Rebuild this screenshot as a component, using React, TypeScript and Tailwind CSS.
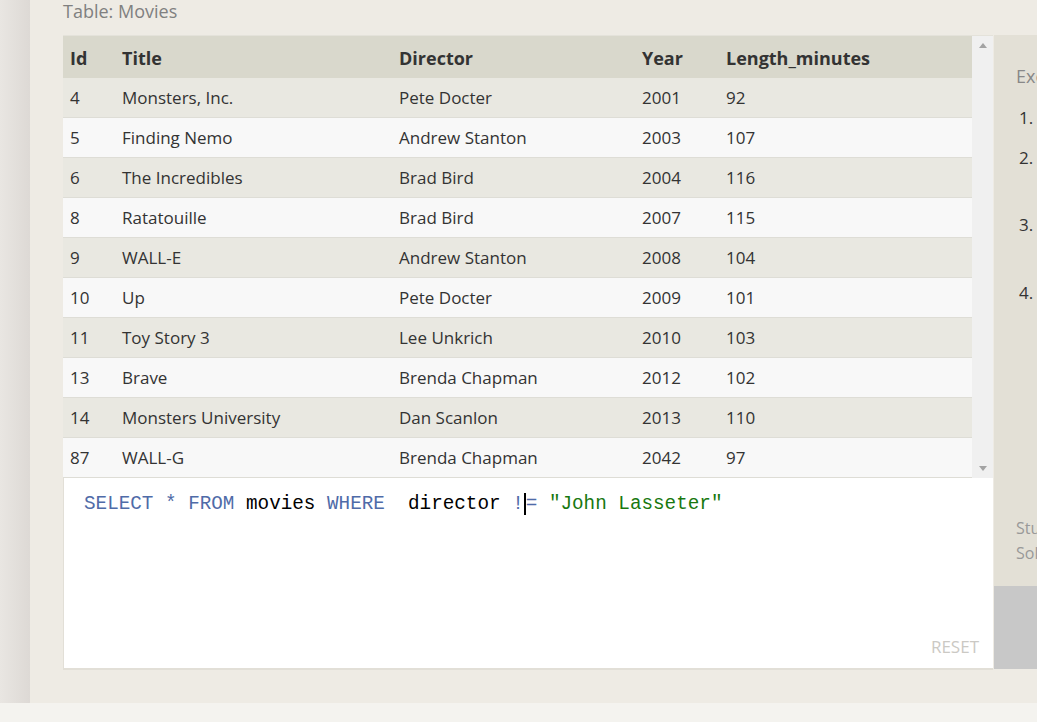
import React from 'react';

interface Movie {
    id: number;
    title: string;
    director: string;
    year: number;
    length: number;
}

const movies: Movie[] = [
    { id: 4, title: 'Monsters, Inc.', director: 'Pete Docter', year: 2001, length: 92 },
    { id: 5, title: 'Finding Nemo', director: 'Andrew Stanton', year: 2003, length: 107 },
    { id: 6, title: 'The Incredibles', director: 'Brad Bird', year: 2004, length: 116 },
    { id: 8, title: 'Ratatouille', director: 'Brad Bird', year: 2007, length: 115 },
    { id: 9, title: 'WALL-E', director: 'Andrew Stanton', year: 2008, length: 104 },
    { id: 10, title: 'Up', director: 'Pete Docter', year: 2009, length: 101 },
    { id: 11, title: 'Toy Story 3', director: 'Lee Unkrich', year: 2010, length: 103 },
    { id: 13, title: 'Brave', director: 'Brenda Chapman', year: 2012, length: 102 },
    { id: 14, title: 'Monsters University', director: 'Dan Scanlon', year: 2013, length: 110 },
    { id: 87, title: 'WALL-G', director: 'Brenda Chapman', year: 2042, length: 97 },
];

const font = { fontFamily: '"Open Sans", "Noto Sans", sans-serif' };

export default function App() {
    return (
        <div className="flex h-[722px] w-[1037px] flex-col overflow-hidden bg-[#f4f3ef]" style={font}>
            <div className="flex h-[703px]">
                {/* left shadow strip */}
                <div className="w-[30px] shrink-0 bg-linear-to-r from-[#e9e6e2] to-[#ddd9d5]" />

                <div className="flex min-w-0 flex-1 flex-col bg-[#eeebe4] pl-[33px]">
                    <div className="h-[35px] text-[18px] leading-[22px] text-[#808080]">Table: Movies</div>

                    <div className="flex">
                        <div className="flex w-[930px] shrink-0 flex-col">
                            {/* results table */}
                            <div className="flex h-[443px] border-t border-[#e4e2da]">
                                <div className="w-[909px]">
                                    <div className="flex h-[42px] items-center bg-[#d9d8cc] pt-[3px] text-[18px] font-bold text-[#333]">
                                        <div className="w-[59px] pl-[7px]">Id</div>
                                        <div className="w-[277px]">Title</div>
                                        <div className="w-[243px]">Director</div>
                                        <div className="w-[84px]">Year</div>
                                        <div>Length_minutes</div>
                                    </div>
                                    {movies.map((m, i) => (
                                        <div
                                            key={m.id}
                                            className={`flex h-[40px] items-center border-b border-[#deddd6] text-[17px] text-[#333] ${
                                                i % 2 === 0 ? 'bg-[#e9e8e1]' : 'bg-[#f8f8f8]'
                                            }`}
                                        >
                                            <div className="w-[59px] pl-[7px]">{m.id}</div>
                                            <div className="w-[277px]">{m.title}</div>
                                            <div className="w-[243px]">{m.director}</div>
                                            <div className="w-[84px]">{m.year}</div>
                                            <div>{m.length}</div>
                                        </div>
                                    ))}
                                </div>
                                {/* scrollbar */}
                                <div className="flex w-[21px] flex-col items-center justify-between bg-[#f0f0f0] py-[7px]">
                                    <div className="h-0 w-0 border-x-[4px] border-b-[5px] border-x-transparent border-b-[#a3a3a3]" />
                                    <div className="h-0 w-0 border-x-[4px] border-t-[5px] border-x-transparent border-t-[#a3a3a3]" />
                                </div>
                            </div>

                            {/* query editor */}
                            <div className="relative h-[192px] border-b-2 border-l border-[#e2dfd7] bg-white">
                                <div
                                    className="pl-[20px] pt-[14px] text-[19.3px] leading-[24px] whitespace-pre text-black"
                                    style={{ fontFamily: '"Liberation Mono", "DejaVu Sans Mono", monospace' }}
                                >
                                    <span className="text-[#4f6ba8]">SELECT * FROM</span> movies{' '}
                                    <span className="text-[#4f6ba8]">WHERE</span>  director{' '}
                                    <span className="text-[#4f6ba8]">!</span>
                                    <span className="inline-block h-[22px] w-0 border-l-2 border-black align-middle" />
                                    <span className="text-[#4f6ba8]">=</span>{' '}
                                    <span className="text-[#18780f]">"John Lasseter"</span>
                                </div>
                                <div className="absolute bottom-[9px] right-[14px] text-[17px] text-[#cbc9c4]">RESET</div>
                            </div>
                        </div>

                        {/* exercise panel, cut off at the right */}
                        <div className="ml-px flex min-w-0 flex-1 flex-col overflow-hidden">
                            <div className="flex h-[551px] flex-col bg-[#e3e0d6] pl-[22px] text-[17px] whitespace-nowrap">
                                <div className="mt-[28px] text-[18px] text-[#888]">Exercise</div>
                                <div className="mt-[15px] pl-[3px] text-[#333]">1.</div>
                                <div className="mt-[14px] pl-[3px] text-[#333]">2.</div>
                                <div className="mt-[42px] pl-[3px] text-[#333]">3.</div>
                                <div className="mt-[42px] pl-[3px] text-[#333]">4.</div>
                                <div className="mt-[211px] text-[16px] leading-[25px] text-[#999]">Stuck?</div>
                                <div className="text-[16px] leading-[25px] text-[#999]">Solution</div>
                            </div>
                            <div className="h-[83px] bg-[#c8c8c8]" />
                        </div>
                    </div>
                </div>
            </div>
        </div>
    );
}
